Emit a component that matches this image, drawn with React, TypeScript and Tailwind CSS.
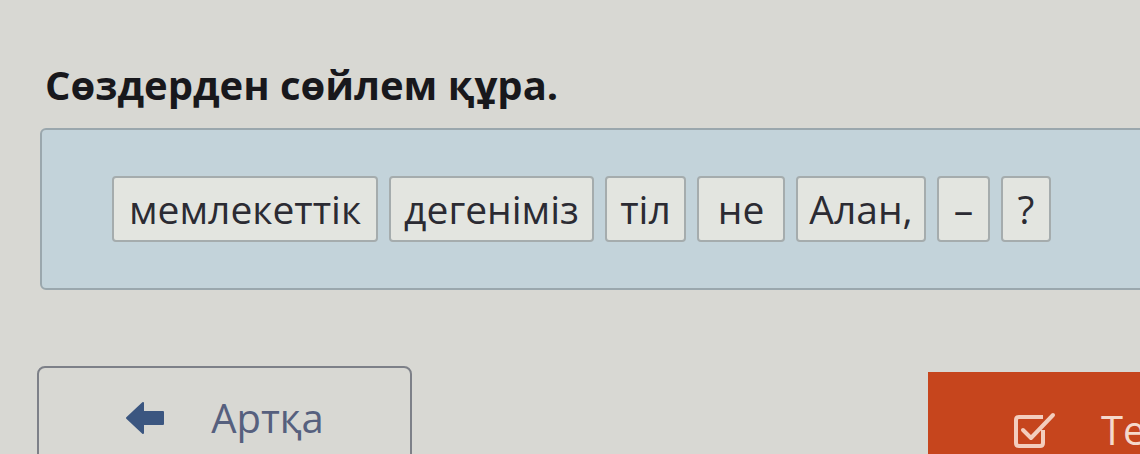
const words = [
  { text: 'мемлекеттік', w: 'w-[266px]' },
  { text: 'дегеніміз', w: 'w-[205px]' },
  { text: 'тіл', w: 'w-[81px]' },
  { text: 'не', w: 'w-[88px]' },
  { text: 'Алан,', w: 'w-[130px]' },
  { text: '–', w: 'w-[53px]' },
  { text: '?', w: 'w-[50px]' },
]

const App = () => {
  return (
    <div className="h-[454px] w-[1140px] overflow-hidden bg-[#d8d8d3] font-['Open_Sans',sans-serif]">
      <h1 className="pl-[45px] pt-[61px] text-[40px] leading-[48px] font-bold text-[#18181c]">
        Сөздерден сөйлем құра.
      </h1>

      <div className="mt-[19px] ml-[40px] h-[162px] w-[1120px] rounded-[6px] border-2 border-[#9aa7ad] bg-[#c3d3da] pt-[46px] pl-[70px]">
        <div className="flex gap-[11px]">
          {words.map((word) => (
            <div
              key={word.text}
              className={`${word.w} flex h-[66px] items-center justify-center rounded-[4px] border-2 border-[#a5acad] bg-[#e3e5e0] text-[39px] text-[#2b2b33]`}
            >
              {word.text}
            </div>
          ))}
        </div>
      </div>

      <div className="mt-[76px] flex items-start">
        <button className="ml-[37px] flex h-[100px] w-[375px] shrink-0 items-start justify-center rounded-t-[8px] border-2 border-[#7d8088] pt-[26px]">
          <div className="flex h-[48px] items-center gap-[46px]">
            <svg width="40" height="34" viewBox="0 0 40 34">
              <path d="M2 17 L18 2 L18 11 L38 11 L38 23 L18 23 L18 32 Z" fill="#3b5680" strokeLinejoin="round" stroke="#3b5680" strokeWidth="2" />
            </svg>
            <span className="text-[40px] leading-[48px] text-[#56607e]">Артқа</span>
          </div>
        </button>
        <button className="mt-[6px] ml-[516px] flex h-[100px] flex-1 items-start bg-[#c6451d] pt-[34px] pl-[85px]">
          <div className="flex h-[48px] items-center gap-[44px]">
            <svg width="44" height="40" viewBox="0 0 44 40" fill="none" stroke="#f3cdbd" strokeWidth="4">
              <path d="M30 20 L30 33 Q30 36 27 36 L6 36 Q3 36 3 33 L3 10 Q3 7 6 7 L30 7" strokeLinejoin="round" />
              <path d="M10 20 L18 28 L40 5" strokeLinecap="round" strokeLinejoin="round" />
            </svg>
            <span className="text-[40px] leading-[48px] text-[#f5d9cc]">Тексеру</span>
          </div>
        </button>
      </div>
    </div>
  )
}

export default App
